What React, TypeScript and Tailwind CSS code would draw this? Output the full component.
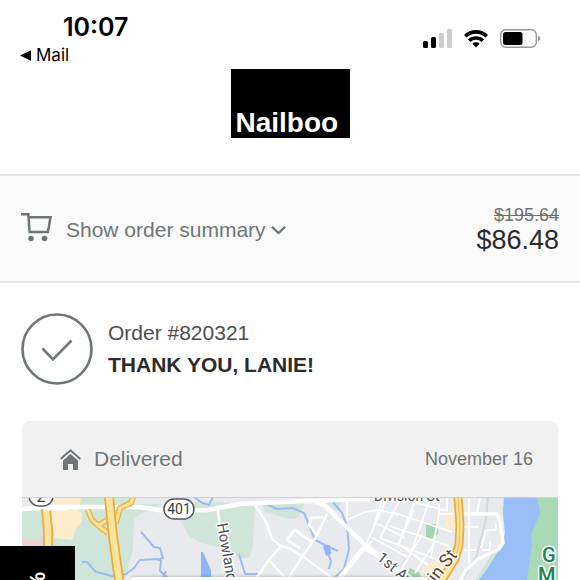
import type { ReactNode } from "react";

function StatusIcons() {
  return (
    <div className="flex items-center gap-3">
      <svg width="29" height="19" viewBox="0 0 29 19" aria-hidden="true">
        <rect x="0" y="12" width="5" height="7" rx="1.5" fill="#000" />
        <rect x="8" y="8" width="5" height="11" rx="1.5" fill="#000" />
        <rect x="16" y="4" width="5" height="15" rx="1.5" fill="#ccc" />
        <rect x="24" y="0" width="5" height="19" rx="1.5" fill="#ccc" />
      </svg>
      <svg width="24" height="19" viewBox="0 0 24 19" fill="none" stroke="#000" strokeWidth="3.6" aria-hidden="true">
        <path d="M1.200 7.300a15.400 15.400 0 0 1 21.600 0" />
        <path d="M5.200 11.700a9.800 9.800 0 0 1 13.600 0" />
        <path d="M8.300 14.800 12 18.600l3.700-3.800a5.400 5.400 0 0 0-7.400 0z" fill="#000" stroke="none" />
      </svg>
      <svg width="41" height="19" viewBox="0 0 41 19" aria-hidden="true">
        <rect x="0.700" y="0.700" width="35.600" height="17.600" rx="5" fill="none" stroke="#999" strokeWidth="1.400" />
        <rect x="3" y="3" width="19.500" height="13" rx="2.500" fill="#000" />
        <path d="M38 6.500c3 .8 3 5.200 0 6z" fill="#999" />
      </svg>
    </div>
  );
}

function StatusBar() {
  return (
    <div className="flex h-[69px] items-start justify-between pr-[39px] pl-5 font-[Inter,sans-serif] text-black">
      <div className="pt-3">
        <div className="pl-[43px] text-[25px] leading-[30px] font-semibold">10:07</div>
        <button type="button" className="flex items-center gap-1 text-[17px] leading-[26px]">
          <svg width="12" height="11" viewBox="0 0 12 11" aria-hidden="true">
            <path d="M0 5.500 11 .3v10.400z" fill="#000" />
          </svg>
          Mail
        </button>
      </div>
      <div className="pt-[29px]">
        <StatusIcons />
      </div>
    </div>
  );
}

function Label({ x, y, rotate, size, fill, children, weight }: {
  x: number; y: number; rotate?: number; size: number; fill: string; weight?: number; children: ReactNode;
}) {
  return (
    <text
      x={x}
      y={y}
      transform={`rotate(${rotate ?? 0} ${x} ${y})`}
      fontSize={size}
      fontWeight={weight ?? 400}
      fill={fill}
      stroke="#fff"
      strokeWidth="3"
      strokeLinejoin="round"
      paintOrder="stroke"
    >
      {children}
    </text>
  );
}

function DeliveryMap() {
  return (
    <svg
      className="block h-[83px] w-full font-[Roboto,sans-serif]"
      viewBox="22 497 536 83"
      preserveAspectRatio="xMidYMin slice"
      role="img"
      aria-label="Map of the delivery address"
    >
      <rect x="22" y="497" width="536" height="83" fill="#e8eaed" />
      <g fill="#d0e5d9">
        <path d="M22 507h33v-10h73l4 7h30l-20 10q-8 2-8 8l-1 27-8 31H22z" />
        <path d="M176 504l24-3 55 4-1 13-1 28-3 11-10 2-12-9-26-7-13-7-8-14z" />
        <path d="M260 502h45l-7 16-9 1-24-7zM326 503l17-4-6 12z" />
        <path d="M502 506l3 25-2 12-12 12-15 25h30V506z" />
      </g>
      <path d="M22 540l22-1v20H22z" fill="#edd3d5" />
      <path d="M53 497h28l-2 14 3 2v9l-6 6-4 12-17-2-4-20z" fill="#fbeccb" />
      <path d="M446 512l12 1v18l-12-2zM423 568l11-8 14 9-7 11h-18z" fill="#fbeccb" />
      <path d="M426 524h12v10l-6 5-6-2zM410 568l10 5 1 7h-16z" fill="#a5d6b2" />
      <path d="M504 497h36l1 19-8 27-5 37h-49l10-14 13-21 3-12-2-20z" fill="#9bbef9" />
      <path d="M537 497h21v83h-31l5-36-1-9 9-22z" fill="#a7dab5" />
      <path d="M488 497l-2 22-9 36-14 25" fill="none" stroke="#d5d8dc" strokeWidth="2" />

      <g fill="none" stroke="#9bbcf5" strokeWidth="2" strokeLinejoin="round">
        <path d="M82 562l5 0 9 10 16 4 14-2 8-6 6-8 18-1 3 2-1 10 9 8M141 532l13 15 6 1 3 10-5 2M166 571l-4 9" />
        <path d="M194 497l8 6 7 2 4-8M239 554l6 20h15M264 503l13 6 16-1 11 5 11 27 12 6 11 5" />
        <path d="M333 502l9 11 5 13 2 23-5 20-12 11h-4M327 551l4 10-2 8" />
      </g>
      <path d="M323 546l7-1 1 9-5 2zM201 552l2 0 8 18v10h-10z" fill="#8fb5f7" />

      <g fill="none" stroke="#fff" strokeLinejoin="round" strokeWidth="2.500">
        <path d="M218 510l3 31 6 39M255 505l11 17 6 17 9 7 8 2 16 10 27 20M281 546l-12 14-14 20M269 560l18 20M289 537l6-7 18 13M289 537l-2 3 13 8M327 514l-11 23-12 17-17 26M327 517l-16 1-2 7 7 9" />
        <path d="M347 500v20l18-8 15-2 18 5M386 500l-20 45M378 524l27 14M373 538l34 19M365 550l40 22" strokeWidth="1.800" />
        <path d="M372 541l-29 35M382 500l-8 25M400 500l-20 38M416 498l-17 45M430 498l-20 58M439 504v10h16M439 514l-8 43M392 512l60 20M390 526l60 20M380 538l58 22M369 549l44 29M405 500l43 11M414 510l-16 36M422 535l-21 35M433 545l-18 28M397 543l31 22M447 497v14M480 498l-3 15M469 497v66M460 527h19M464 550h12M487 530h9v-6M486 530l-5 18M482 550h8v-9" strokeWidth="1.800" />
        <path d="M459 514h37l4 6 3 23-4 6-21 10-12 11-7 14" strokeWidth="3.500" />
        <path d="M365 546l-27 34" strokeWidth="4.500" />
        <path d="M22 509l33-2h85l25 4 43-1 32-6 65-3 125-4M313 501l11 4 41 40 39 30 10 8" strokeWidth="4.500" />
      </g>

      <g fill="none" strokeLinejoin="round">
        <path d="M88 510l4 10 9 8 7 5M109 519l-10 6M133 497l-2 6-11 5-4 15" stroke="#edb54b" strokeWidth="6" />
        <path d="M88 510l4 10 9 8 7 5M109 519l-10 6M133 497l-2 6-11 5-4 15" stroke="#fbe4a0" strokeWidth="3" />
        <path d="M46 509l2 22v49M109 497l4 39 6 44" stroke="#edaa38" strokeWidth="10" />
        <path d="M46 509l2 22v49M109 497l4 39 6 44" stroke="#fbe4a0" strokeWidth="6.500" />
        <path d="M458 497l2 28-1 20-4 14-13 21" stroke="#edaa38" strokeWidth="9" />
        <path d="M458 497l2 28-1 20-4 14-13 21" stroke="#fbe4a0" strokeWidth="5.500" />
        <path d="M458 497l2 28-1 20-4 14" stroke="#edb54b" strokeWidth="1" />
        <path d="M44 508h24" stroke="#fff" strokeWidth="5" />
      </g>

      <rect x="29" y="484" width="24" height="22" rx="10" fill="#fff" stroke="#55595e" strokeWidth="1.500" />
      <text x="41" y="502" textAnchor="middle" fontSize="16" fill="#3c4043">2</text>
      <rect x="164" y="499" width="30" height="20" rx="10" fill="#fff" stroke="#55595e" strokeWidth="1.500" />
      <text x="179" y="514" textAnchor="middle" fontSize="14" fill="#3c4043">401</text>
      <Label x={217} y={524} rotate={80} size={15} fill="#4d5156">Howland</Label>
      <Label x={374} y={501} size={14} fill="#4d5156">Division St</Label>
      <Label x={376} y={559} rotate={40} size={15} fill="#4d5156">1st Ave</Label>
      <Label x={430} y={591} rotate={-52} size={18} fill="#5f3f23">ain St</Label>
      <Label x={542} y={562} size={20} fill="#228252" weight={500}>G</Label>
      <Label x={538} y={582} size={20} fill="#228252" weight={500}>M</Label>
      <path d="M22 497.500h536" stroke="#d2d3d6" />
    </svg>
  );
}

export default function App() {
  return (
    <div className="relative h-screen overflow-hidden bg-white font-[Liberation_Sans,Arial,sans-serif]">
      <StatusBar />
      <header className="flex h-[105px] justify-center">
        <a href="#" className="flex h-[69px] w-[119px] items-end bg-black pl-[5px] text-[28px] leading-[30px] font-bold text-white">
          Nailboo
        </a>
      </header>

      <section className="flex h-[109px] items-center justify-between border-y-2 border-[#e6e6e6] bg-[#fafafa] px-[21px] pt-[2px]">
        <button type="button" className="flex items-center text-[21px] leading-7 text-[#6e7677]">
          <svg className="mb-[6px]" width="31" height="30" viewBox="0 0 31 30" fill="none" stroke="#6e7677" strokeWidth="2.500" aria-hidden="true">
            <path d="M0 2.200h7.300L8.600 20h18.300L29.500 5.300H7.500" />
            <circle cx="10" cy="26.500" r="2.800" fill="#6e7677" stroke="none" />
            <circle cx="23.500" cy="26.500" r="2.800" fill="#6e7677" stroke="none" />
          </svg>
          <span className="pl-[14px]">Show order summary</span>
          <svg className="ml-[5px]" width="15" height="10" viewBox="0 0 15 10" fill="none" stroke="#6e7677" strokeWidth="2.300" aria-hidden="true">
            <path d="M1 1.800 7.500 8 14 1.800" />
          </svg>
        </button>
        <div className="text-right">
          <del className="block text-[18px] leading-5 text-[#717171]">$195.64</del>
          <div className="text-[27px] leading-[30px] text-[#2b2b2b]">$86.48</div>
        </div>
      </section>

      <section className="flex items-center gap-[15px] px-[21px] pt-[30px] pb-9">
        <svg width="72" height="72" viewBox="0 0 72 72" fill="none" stroke="#6e7677" strokeWidth="2.600" aria-hidden="true">
          <circle cx="36" cy="36" r="34.500" />
          <path d="M21.500 35.500 32 46.500 50.500 27.500" />
        </svg>
        <div>
          <p className="text-[21px] leading-8 text-[#4d4d4d]">Order #820321</p>
          <h1 className="text-[21px] leading-8 font-bold text-[#2b2b2b]">THANK YOU, LANIE!</h1>
        </div>
      </section>

      <section className="mx-[22px] overflow-hidden rounded-t-lg bg-[#f1f1f1]">
        <div className="flex h-[76px] items-center justify-between pr-[25px] pl-[38px]">
          <h2 className="flex items-center gap-[13px] text-[21px] leading-7 text-[#6e7677]">
            <svg width="21" height="21" viewBox="0 0 21 21" aria-hidden="true">
              <path d="M.7 10 10.500 1.300 20.300 10" fill="none" stroke="#6e7677" strokeWidth="2" />
              <path d="M10.500 5 18 11.500V20q0 1-1 1h-4v-6H8v6H4q-1 0-1-1v-8.500z" fill="#6e7677" />
            </svg>
            Delivered
          </h2>
          <span className="text-[18px] leading-7 text-[#717171]">November 16</span>
        </div>
        <div className="relative">
          <DeliveryMap />
          <div className="absolute right-[130px] bottom-0 left-[109px] h-[3px] rounded-t-[3px] bg-white shadow-[0_-1px_3px_rgba(0,0,0,0.150)]" />
        </div>
      </section>

      <button type="button" aria-label="Discount offer" className="absolute bottom-0 left-0 flex h-[34px] w-[75px] justify-center overflow-hidden bg-black pt-[26px] text-[22px] leading-6 font-bold text-white">
        <span className="h-6 w-6 -rotate-90 text-right">%</span>
      </button>
    </div>
  );
}
